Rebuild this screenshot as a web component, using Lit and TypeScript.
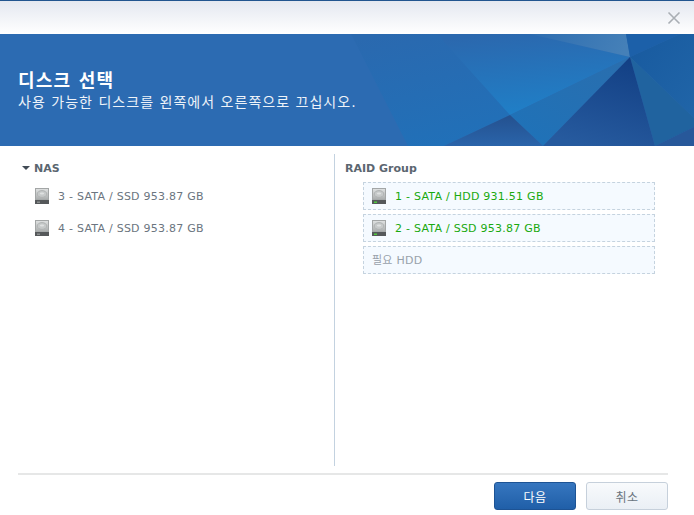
import { LitElement, html, css, svg } from "lit";
import { customElement } from "lit/decorators.js";

const disk = (green: boolean) => html`<svg class="disk" width="14" height="16" viewBox="0 0 14 16">
  <defs><linearGradient id="dg" x1="0" y1="0" x2="0" y2="1"><stop offset="0" stop-color="#e2e4e4"/><stop offset="1" stop-color="#a8abab"/></linearGradient></defs>
  <rect x="0" y="0" width="14" height="12" fill="url(#dg)"/>
  <rect x="0.5" y="0.5" width="13" height="11.5" fill="none" stroke="#a3a6a6"/>
  <ellipse cx="7" cy="6" rx="4.8" ry="3.4" fill="#c6c9c9" stroke="#b0b3b3"/>
  <ellipse cx="7" cy="5.4" rx="2.2" ry="1" fill="#dfe1e1"/>
  <rect x="0" y="12" width="14" height="4" fill="#55585a"/>
  <rect x="2" y="13.5" width="3" height="1.5" fill="${green ? "#4fc83c" : "#8a8d8d"}"/>
</svg>`;

const bg = svg`
  <defs>
    <linearGradient id="a" x1="0.2" y1="0" x2="0.5" y2="1"><stop offset="0" stop-color="#2a69af"/><stop offset="1" stop-color="#2170b8"/></linearGradient>
    <linearGradient id="b" x1="0.3" y1="0" x2="0.55" y2="1"><stop offset="0" stop-color="#2b68ae"/><stop offset="1" stop-color="#1f80c8"/></linearGradient>
    <linearGradient id="d" x1="0" y1="0" x2="1" y2="0.1"><stop offset="0" stop-color="#2d6db0"/><stop offset="1" stop-color="#4580b8"/></linearGradient>
    <linearGradient id="e" x1="0.75" y1="0" x2="0.4" y2="1"><stop offset="0" stop-color="#123f84"/><stop offset="1" stop-color="#265a9e"/></linearGradient>
    <linearGradient id="f" x1="0.5" y1="0" x2="0.5" y2="1"><stop offset="0" stop-color="#24518f"/><stop offset="1" stop-color="#2a64aa"/></linearGradient>
    <linearGradient id="g" x1="1" y1="0" x2="0.2" y2="1"><stop offset="0" stop-color="#2a6eae"/><stop offset="1" stop-color="#1f72b8"/></linearGradient>
    <linearGradient id="h" x1="0" y1="0" x2="1" y2="1"><stop offset="0" stop-color="#185a9f"/><stop offset="1" stop-color="#2065a8"/></linearGradient>
  </defs>
  <rect width="694" height="112" fill="#2c6bb2"/>
  <polygon points="351,0 447,0 510,81 444,112 408,112" fill="url(#a)"/>
  <polygon points="437,0 530,0 630,23 510,81" fill="url(#b)"/>
  <polygon points="530,0 626,0 630,23" fill="url(#d)"/>
  <polygon points="626,0 680,0 630,23" fill="#1c60a9"/>
  <polygon points="680,0 694,0 694,84 630,23" fill="url(#h)"/>
  <polygon points="630,23 694,84 694,93 655,112" fill="#20639f"/>
  <polygon points="694,93 694,112 655,112" fill="#27589a"/>
  <polygon points="630,23 510,81 543,112" fill="url(#g)"/>
  <polygon points="630,23 543,112 655,112" fill="url(#e)"/>
  <polygon points="510,81 444,112 543,112" fill="url(#f)"/>
`;

@customElement("app-root")
export class AppRoot extends LitElement {
  static styles = css`
    :host { display: block; width: 694px; height: 515px; background: #fff; font-family: "DejaVu Sans", "Noto Sans CJK KR", sans-serif; overflow: hidden; }
    .top { height: 33px; border-top: 1px solid #21558f; background: linear-gradient(#e4e8f0, #fff); display: flex; justify-content: flex-end; align-items: center; padding-right: 13px; }
    .close { display: block; }
    .banner { position: relative; height: 112px; background: #2c6bb2; color: #fff; overflow: hidden; }
    .banner svg { position: absolute; inset: 0; }
    .btext { position: relative; padding: 35px 0 0 18px; }
    .title { font-size: 18px; font-weight: 700; line-height: 24px; letter-spacing: 1.2px; }
    .sub { font-size: 14px; line-height: 18px; color: #eef3f9; white-space: nowrap; letter-spacing: 1.02px; }
    .main { display: flex; height: 312px; margin-top: 8px; }
    .left { width: 316px; margin-left: 18px; border-right: 1px solid #c3d2e0; padding-top: 7px; }
    .right { flex: 1; padding-top: 7px; padding-left: 10px; }
    .h { font-size: 11px; font-weight: 700; color: #5b6670; line-height: 16px; display: flex; align-items: center; }
    .tri { width: 0; height: 0; border: 4.5px solid transparent; border-top: 4px solid #414b55; border-bottom: 0; margin: 0 4px 2px 4px; }
    .lrow { display: flex; align-items: center; height: 32px; padding-left: 17px; font-size: 11px; letter-spacing: 0.25px; color: #6b7580; gap: 9px; white-space: nowrap; }
    .list { margin-top: 3px; }
    .slots { margin: 5px 0 0 18px; width: 292px; display: flex; flex-direction: column; gap: 4px; }
    .slot { height: 28px; box-sizing: border-box; border: 1px dashed #c5d3df; background: #f5faff; display: flex; align-items: center; padding-left: 8px; gap: 9px; font-size: 11px; letter-spacing: 0.25px; color: #1aa90f; white-space: nowrap; }
    .need { color: #98a1aa; }
    .need span { position: relative; top: -1px; }
    .foot { margin: 7px 26px 0 18px; border-top: 2px solid #e6e7e7; display: flex; justify-content: flex-end; gap: 10px; padding-top: 7px; }
    .btn { width: 82px; height: 28px; box-sizing: border-box; border-radius: 3px; display: flex; align-items: center; justify-content: center; font-size: 12px; letter-spacing: 0.5px; }
    .primary { background: linear-gradient(#3676bf, #205fa8); border: 1px solid #1d5394; color: #fff; }
    .plain { background: linear-gradient(#f8fafc, #eaeff5); border: 1px solid #c6d0db; color: #6a747e; }
  `;
  render() {
    return html`
      <div class="top"><svg class="close" width="14" height="14" viewBox="0 0 14 14"><path d="M1.5 1.5 12.5 12.5M12.5 1.5 1.5 12.5" stroke="#a9aeb4" stroke-width="1.6" fill="none"/></svg></div>
      <div class="banner">
        <svg width="694" height="112" viewBox="0 0 694 112">${bg}</svg>
        <div class="btext"><div class="title">디스크 선택</div><div class="sub">사용 가능한 디스크를 왼쪽에서 오른쪽으로 끄십시오.</div></div>
      </div>
      <div class="main">
        <div class="left">
          <div class="h"><span class="tri"></span>NAS</div>
          <div class="list">
            <div class="lrow">${disk(false)}<span>3 - SATA / SSD 953.87 GB</span></div>
            <div class="lrow">${disk(false)}<span>4 - SATA / SSD 953.87 GB</span></div>
          </div>
        </div>
        <div class="right">
          <div class="h">RAID Group</div>
          <div class="slots">
            <div class="slot">${disk(true)}<span>1 - SATA / HDD 931.51 GB</span></div>
            <div class="slot">${disk(true)}<span>2 - SATA / SSD 953.87 GB</span></div>
            <div class="slot need"><span>필요 HDD</span></div>
          </div>
        </div>
      </div>
      <div class="foot"><div class="btn primary">다음</div><div class="btn plain">취소</div></div>
    `;
  }
}
